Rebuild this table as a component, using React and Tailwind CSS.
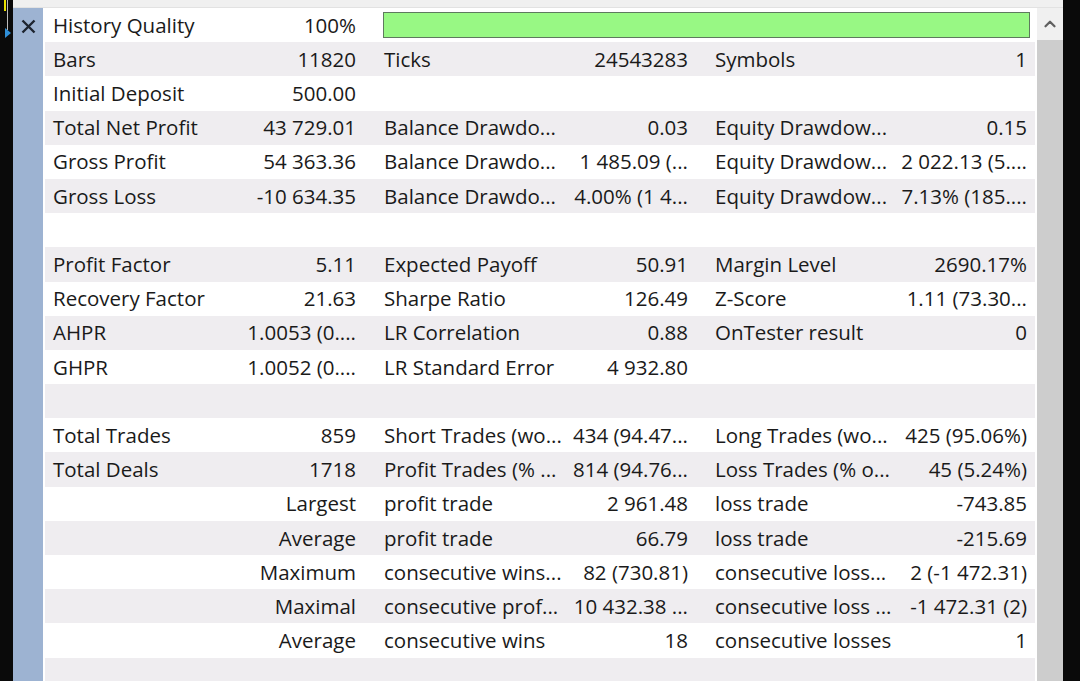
import { ChevronUp } from 'lucide-react';

const rows = [
  ['History Quality', '100%', 'BAR'],
  ['Bars', '11820', 'Ticks', '24543283', 'Symbols', '1'],
  ['Initial Deposit', '500.00', '', '', '', ''],
  ['Total Net Profit', '43 729.01', 'Balance Drawdo...', '0.03', 'Equity Drawdow...', '0.15'],
  ['Gross Profit', '54 363.36', 'Balance Drawdo...', '1 485.09 (...', 'Equity Drawdow...', '2 022.13 (5....'],
  ['Gross Loss', '-10 634.35', 'Balance Drawdo...', '4.00% (1 4...', 'Equity Drawdow...', '7.13% (185....'],
  null,
  ['Profit Factor', '5.11', 'Expected Payoff', '50.91', 'Margin Level', '2690.17%'],
  ['Recovery Factor', '21.63', 'Sharpe Ratio', '126.49', 'Z-Score', '1.11 (73.30...'],
  ['AHPR', '1.0053 (0....', 'LR Correlation', '0.88', 'OnTester result', '0'],
  ['GHPR', '1.0052 (0....', 'LR Standard Error', '4 932.80', '', ''],
  null,
  ['Total Trades', '859', 'Short Trades (wo...', '434 (94.47...', 'Long Trades (wo...', '425 (95.06%)'],
  ['Total Deals', '1718', 'Profit Trades (% ...', '814 (94.76...', 'Loss Trades (% o...', '45 (5.24%)'],
  ['', 'Largest', 'profit trade', '2 961.48', 'loss trade', '-743.85'],
  ['', 'Average', 'profit trade', '66.79', 'loss trade', '-215.69'],
  ['', 'Maximum', 'consecutive wins...', '82 (730.81)', 'consecutive loss...', '2 (-1 472.31)'],
  ['', 'Maximal', 'consecutive prof...', '10 432.38 ...', 'consecutive loss ...', '-1 472.31 (2)'],
  ['', 'Average', 'consecutive wins', '18', 'consecutive losses', '1'],
  null,
];

function Row({ cells, index }) {
  const bg = index % 2 === 1 ? 'bg-[#efedf0]' : 'bg-white';
  const base = `${bg} h-[34.2px] shrink-0 grid grid-cols-[185px_146px_189px_142px_189px_139px] items-center whitespace-nowrap`;
  if (!cells) return <div className={base} />;
  if (cells[2] === 'BAR') {
    return (
      <div className={base}>
        <div className="pl-2">{cells[0]}</div>
        <div className="pr-5 text-right">{cells[1]}</div>
        <div className="col-span-4 pl-[7px] pr-[5px]">
          <div className="h-[26px] border border-[#5e7a5e] bg-[#98f884]" />
        </div>
      </div>
    );
  }
  return (
    <div className={base}>
      <div className="pl-2 overflow-hidden">{cells[0]}</div>
      <div className="pr-5 text-right">{cells[1]}</div>
      <div className="pl-2 overflow-hidden">{cells[2]}</div>
      <div className="pr-[19px] text-right">{cells[3]}</div>
      <div className="pl-2 overflow-hidden">{cells[4]}</div>
      <div className="pr-2 text-right">{cells[5]}</div>
    </div>
  );
}

export default function App() {
  return (
    <div
      className="w-[1080px] h-[681px] overflow-hidden flex bg-neutral-950 text-[#1a1a1a] text-[20.5px]"
      style={{ fontFamily: '"Open Sans", "Noto Sans", sans-serif' }}
    >
      <div className="w-[13px] h-full shrink-0 relative bg-neutral-950">
        <div className="absolute left-[4px] top-0 w-[2px] h-[11px] bg-[#e8e000]" />
        <div className="absolute left-[7px] top-0 w-[1px] h-[30px] bg-[#bbbbbb]" />
        <div className="absolute left-[5px] top-[28px] w-0 h-0 border-y-[5px] border-y-transparent border-l-[6px] border-l-[#2f8fd8]" />
      </div>
      <div className="w-[1050px] shrink-0 flex flex-col bg-[#f0f0f0]">
        <div className="h-[8px] shrink-0 border-b border-[#e2e2e2]" />
        <div className="flex flex-1 min-h-0 overflow-hidden">
          <div className="w-[30px] shrink-0 bg-[#9db3d2] flex justify-center pt-[11px]">
            <svg width="15" height="15" viewBox="0 0 15 15">
              <path d="M1.5 1.5 L13.5 13.5 M13.5 1.5 L1.5 13.5" stroke="#1d2430" strokeWidth="2.4" />
            </svg>
          </div>
          <div className="w-[2px] shrink-0 bg-white" />
          <div className="w-[990px] shrink-0 flex flex-col">
            {rows.map((r, i) => (
              <Row key={i} cells={r} index={i} />
            ))}
          </div>
          <div className="w-[2px] shrink-0 bg-white" />
          <div className="w-[26px] shrink-0 bg-[#cdcdcd] flex flex-col">
            <div className="h-[32px] shrink-0 bg-[#f0f0f0] flex items-center justify-center">
              <ChevronUp size={18} strokeWidth={3} className="text-[#606060]" />
            </div>
          </div>
        </div>
      </div>
      <div className="w-[17px] h-full shrink-0 bg-neutral-950" />
    </div>
  );
}
